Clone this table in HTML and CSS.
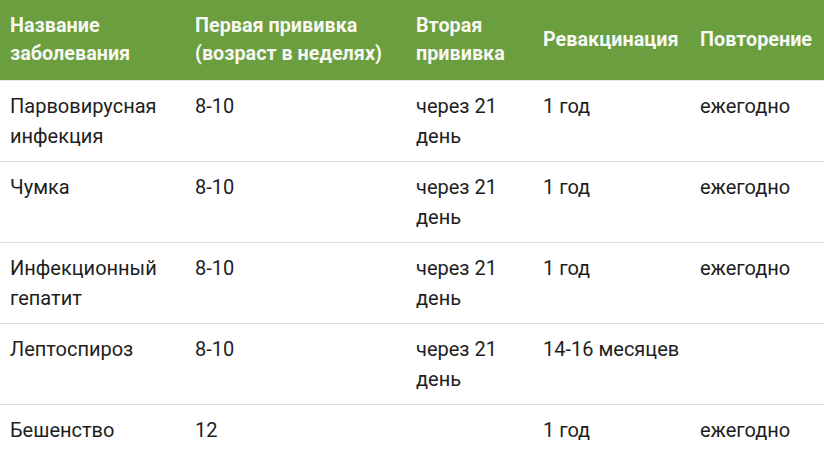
FILE: index.html
```html
<!DOCTYPE html>
<html lang="ru">
<head>
<meta charset="utf-8">
<link rel="stylesheet" href="styles.css">
</head>
<body>
<table class="vac">
  <colgroup>
    <col class="c1"><col class="c2"><col class="c3"><col class="c4"><col class="c5">
  </colgroup>
  <thead>
    <tr>
      <th>Название заболевания</th>
      <th>Первая прививка (возраст в неделях)</th>
      <th>Вторая прививка</th>
      <th>Ревакцинация</th>
      <th>Повторение</th>
    </tr>
  </thead>
  <tbody>
    <tr><td>Парвовирусная инфекция</td><td>8-10</td><td>через 21 день</td><td>1 год</td><td>ежегодно</td></tr>
    <tr><td>Чумка</td><td>8-10</td><td>через 21 день</td><td>1 год</td><td>ежегодно</td></tr>
    <tr><td>Инфекционный гепатит</td><td>8-10</td><td>через 21 день</td><td>1 год</td><td>ежегодно</td></tr>
    <tr><td>Лептоспироз</td><td>8-10</td><td>через 21 день</td><td>14-16 месяцев</td><td></td></tr>
    <tr><td>Бешенство</td><td>12</td><td></td><td>1 год</td><td>ежегодно</td></tr>
  </tbody>
</table>
</body>
</html>
```
FILE: styles.css
```css
html, body {
  margin: 0;
  padding: 0;
  background: #fff;
}
body {
  font-family: Roboto, "Liberation Sans", sans-serif;
  color: #1e1e1e;
}
.vac {
  width: 824px;
  border-collapse: collapse;
  table-layout: fixed;
}
.c1 { width: 185px; }
.c2 { width: 221px; }
.c3 { width: 127px; }
.c4 { width: 157px; }
.c5 { width: 134px; }
.vac th {
  background: #6a9e3e;
  color: #f7f7f3;
  font-weight: 700;
  font-size: 19.8px;
  line-height: 28px;
  text-align: left;
  vertical-align: middle;
  padding: 12px 10px;
  height: 56px;
  border-bottom: 1px solid #e6ecdf;
}
.vac td {
  font-size: 20px;
  line-height: 30px;
  vertical-align: top;
  padding: 10px 10px;
  height: 60px;
  border-bottom: 1px solid #dddddd;
}
```
